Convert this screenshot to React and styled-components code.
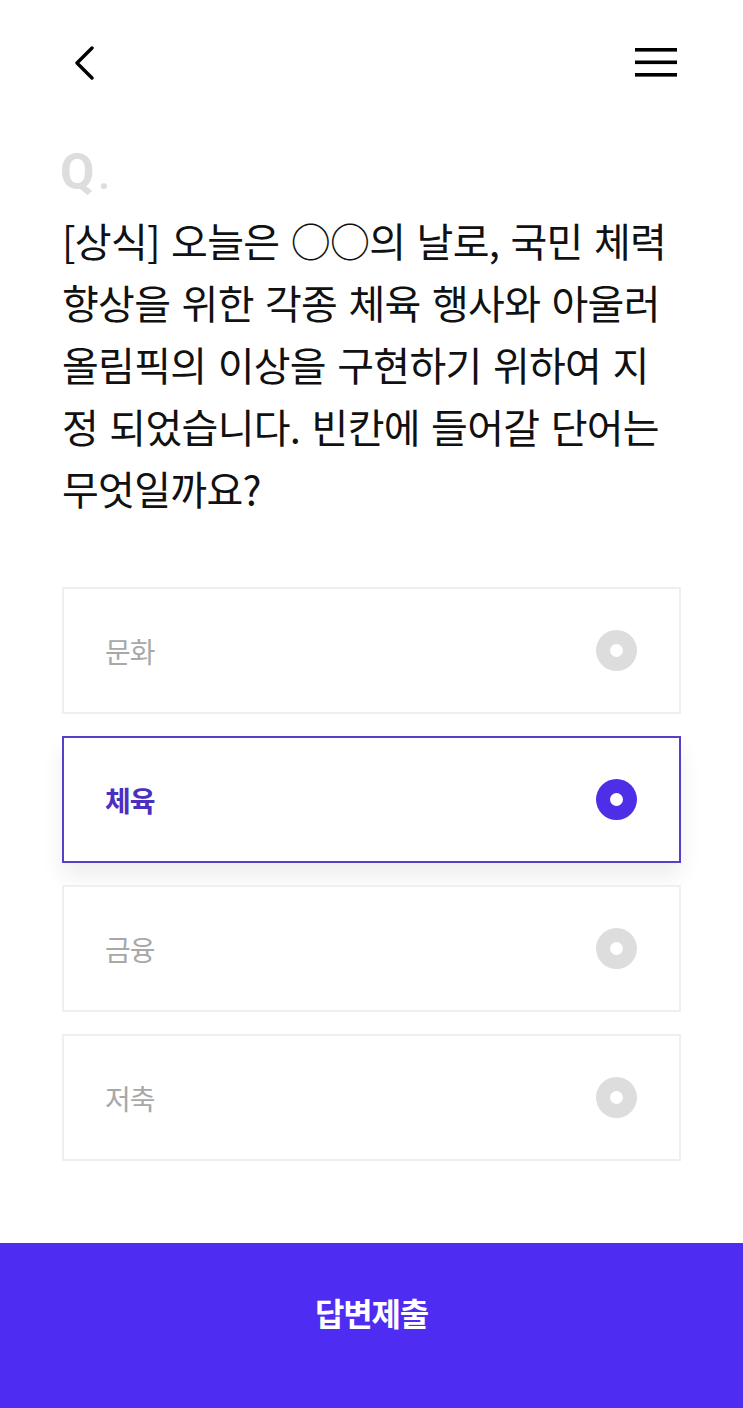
import React, { useState } from "react";
import styled, { createGlobalStyle } from "styled-components";

const GlobalStyle = createGlobalStyle`
  html, body { margin: 0; padding: 0; background: #ffffff; }
  body { font-family: "Noto Sans CJK KR", "Noto Sans", sans-serif; }
  * { box-sizing: border-box; }
`;

const Page = styled.div`
  width: 743px;
  min-height: 1408px;
  display: flex;
  flex-direction: column;
  background: #fff;
`;

const Header = styled.header`
  height: 126px;
  display: flex;
  justify-content: space-between;
  align-items: flex-start;
  padding: 46px 64px 0 72px;
`;

const IconButton = styled.button`
  border: 0;
  background: transparent;
  padding: 0;
  margin: 0;
  display: flex;
  cursor: pointer;
`;

const Main = styled.main`
  flex: 1;
  padding: 0 62px;
  display: flex;
  flex-direction: column;
`;

const QMark = styled.div`
  margin-top: 21px;
  font-family: Roboto, "Liberation Sans", sans-serif;
  font-weight: 700;
  font-size: 50px;
  line-height: 50px;
  color: #dddddd;
  margin-left: -2px;
`;

const Dot = styled.span`
  font-size: 38px;
  margin-left: 4px;
`;

const Question = styled.p`
  margin: 8px 0 0;
  font-family: "Noto Sans CJK KR", "Noto Sans", sans-serif;
  font-size: 40px;
  line-height: 62px;
  letter-spacing: -0.7px;
  word-spacing: 3px;
  font-weight: 400;
  color: #111111;
  white-space: nowrap;
`;

const Options = styled.ul`
  list-style: none;
  margin: 68px 0 0;
  padding: 0;
  display: flex;
  flex-direction: column;
  gap: 22px;
`;

const Option = styled.li`
  height: 127px;
  display: flex;
  align-items: center;
  justify-content: space-between;
  padding: 0 42px 0 41px;
  background: #fff;
  border: 2px solid ${(p) => (p.$active ? "#5a3ec6" : "#efefef")};
  box-shadow: ${(p) => (p.$active ? "0 14px 22px rgba(0,0,0,0.07)" : "none")};
  cursor: pointer;
`;

const OptionLabel = styled.span`
  font-family: "Noto Sans CJK KR", "Noto Sans", sans-serif;
  font-size: 28px;
  letter-spacing: -1px;
  font-weight: ${(p) => (p.$active ? 700 : 400)};
  color: ${(p) => (p.$active ? "#4b2fc0" : "#a8a8a8")};
`;

const Radio = styled.span`
  width: 41px;
  height: 41px;
  border-radius: 50%;
  background: ${(p) => (p.$active ? "#4f2ee8" : "#dddddd")};
  display: flex;
  align-items: center;
  justify-content: center;
  &::after {
    content: "";
    width: 13px;
    height: 13px;
    border-radius: 50%;
    background: #fff;
  }
`;

const Submit = styled.button`
  margin-top: 80px;
  height: 165px;
  width: 100%;
  border: 0;
  padding: 0 0 28px;
  background: #4e2cf2;
  color: #fff;
  font-family: "Noto Sans CJK KR", "Noto Sans", sans-serif;
  font-size: 32px;
  font-weight: 700;
  letter-spacing: -1.2px;
  cursor: pointer;
`;

const BackIcon = () => (
  <svg width="24" height="34" viewBox="0 0 24 34" fill="none">
    <path d="M20 2 L5 17 L20 32" stroke="#000" strokeWidth="3.4" strokeLinecap="round" strokeLinejoin="round" />
  </svg>
);

const MenuIcon = () => (
  <svg width="44" height="34" viewBox="0 0 44 34" fill="none">
    <rect x="0" y="2" width="42" height="3.6" fill="#000" />
    <rect x="0" y="14.5" width="42" height="3.6" fill="#000" />
    <rect x="0" y="27" width="42" height="3.6" fill="#000" />
  </svg>
);

const choices = ["문화", "체육", "금융", "저축"];

export default function App() {
  const [selected, setSelected] = useState(1);
  return (
    <>
      <GlobalStyle />
      <Page>
        <Header>
          <IconButton aria-label="뒤로">
            <BackIcon />
          </IconButton>
          <IconButton aria-label="메뉴">
            <MenuIcon />
          </IconButton>
        </Header>
        <Main>
          <QMark>
            Q<Dot>.</Dot>
          </QMark>
          <Question>
            [상식] 오늘은 ○○의 날로, 국민 체력
            <br />
            향상을 위한 각종 체육 행사와 아울러
            <br />
            올림픽의 이상을 구현하기 위하여 지
            <br />
            정 되었습니다. 빈칸에 들어갈 단어는
            <br />
            무엇일까요?
          </Question>
          <Options>
            {choices.map((c, i) => (
              <Option key={c} $active={i === selected} onClick={() => setSelected(i)}>
                <OptionLabel $active={i === selected}>{c}</OptionLabel>
                <Radio $active={i === selected} />
              </Option>
            ))}
          </Options>
        </Main>
        <Submit>답변제출</Submit>
      </Page>
    </>
  );
}
